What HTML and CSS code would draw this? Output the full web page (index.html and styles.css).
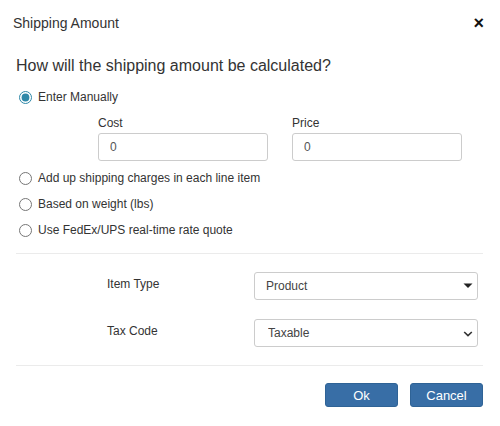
FILE: index.html
```html
<!DOCTYPE html>
<html>
<head>
<meta charset="utf-8">
<link rel="stylesheet" href="styles.css">
</head>
<body>
<div class="dialog">
  <div class="header">
    <span class="title">Shipping Amount</span>
    <span class="close">×</span>
  </div>
  <div class="question">How will the shipping amount be calculated?</div>
  <div class="options">
    <label class="radio-row"><input type="radio" name="calc" checked><span>Enter Manually</span></label>
    <div class="manual-fields">
      <div class="field">
        <div class="field-label">Cost</div>
        <input class="text-input" type="text" value="0">
      </div>
      <div class="field">
        <div class="field-label">Price</div>
        <input class="text-input" type="text" value="0">
      </div>
    </div>
    <div class="radio-list">
      <label class="radio-row"><input type="radio" name="calc"><span>Add up shipping charges in each line item</span></label>
      <label class="radio-row"><input type="radio" name="calc"><span>Based on weight (lbs)</span></label>
      <label class="radio-row"><input type="radio" name="calc"><span>Use FedEx/UPS real-time rate quote</span></label>
    </div>
  </div>
  <hr class="divider">
  <div class="settings">
    <div class="setting-label">Item Type</div>
    <div class="select-wrap">
      <select class="select"><option>Product</option></select>
      <svg class="select-icon" width="10" height="6" viewBox="0 0 10 6"><path d="M0.5 0.5 H9.5 L5 5 Z" fill="#222"/></svg>
    </div>
    <div class="setting-label">Tax Code</div>
    <div class="select-wrap">
      <select class="select select-pad"><option>Taxable</option></select>
      <svg class="select-icon chevron" width="10" height="6" viewBox="0 0 10 6"><path d="M1.2 1 L5 4.6 L8.8 1" fill="none" stroke="#333" stroke-width="1.6"/></svg>
    </div>
  </div>
  <hr class="divider">
  <div class="footer">
    <button class="btn">Ok</button>
    <button class="btn">Cancel</button>
  </div>
</div>
</body>
</html>
```

FILE: styles.css
```css
* { box-sizing: border-box; }
body {
  margin: 0;
  background: #fff;
  font-family: "Liberation Sans", Arial, sans-serif;
  color: #333;
}
.dialog {
  width: 500px;
  height: 426px;
  background: #fff;
}
.header {
  display: flex;
  justify-content: space-between;
  align-items: center;
  padding: 13px 16px 0 13px;
  height: 33px;
}
.title {
  font-size: 14px;
  line-height: 20px;
  color: #333;
}
.close {
  font-size: 18px;
  font-weight: bold;
  line-height: 20px;
  color: #111;
}
.question {
  margin-top: 23px;
  padding-left: 16px;
  font-size: 16px;
  line-height: 20px;
  color: #333;
}
.options {
  margin-top: 12px;
  padding-left: 19px;
}
.radio-row {
  display: flex;
  align-items: center;
  gap: 6px;
  height: 18px;
  font-size: 12px;
  color: #333;
}
.radio-row input {
  margin: 0;
  width: 13px;
  height: 13px;
  accent-color: #2f88a8;
}
.manual-fields {
  display: grid;
  grid-template-columns: 170px 170px;
  column-gap: 24px;
  margin-top: 9px;
  padding-left: 79px;
}
.field-label {
  font-size: 12px;
  line-height: 16px;
  margin-bottom: 2px;
  color: #333;
}
.text-input {
  width: 170px;
  height: 28px;
  border: 1px solid #ccc;
  border-radius: 3px;
  padding: 0 11px;
  font-family: inherit;
  font-size: 12px;
  color: #555;
}
.radio-list {
  display: flex;
  flex-direction: column;
  gap: 8px;
  margin-top: 8px;
}
.divider {
  border: 0;
  border-top: 1px solid #ebebeb;
  margin: 14px 17px 0 16px;
}
.settings {
  display: grid;
  grid-template-columns: 147px 224px;
  row-gap: 19px;
  align-items: center;
  padding-left: 107px;
  margin-top: 18px;
  margin-bottom: 18px;
}
.setting-label {
  font-size: 12px;
  color: #333;
  margin-top: -4px;
}
.select-wrap {
  position: relative;
  height: 28px;
}
.select {
  appearance: none;
  -webkit-appearance: none;
  width: 224px;
  height: 28px;
  border: 1px solid #ccc;
  border-radius: 3px;
  background: #fff;
  padding: 0 11px;
  font-family: inherit;
  font-size: 12px;
  color: #444;
}
.select-pad { padding-left: 13px; }
.select-icon {
  position: absolute;
  right: 5px;
  top: 11px;
}
.chevron { top: 12px; }
.divider + .footer { margin-top: 17px; }
.settings + .divider { margin-top: 0; }
.footer {
  display: flex;
  justify-content: flex-end;
  gap: 12px;
  padding-right: 17px;
}
.btn {
  width: 73px;
  height: 24px;
  border: 1px solid #2f6396;
  border-radius: 3px;
  background: #386ea6;
  color: #fff;
  font-family: inherit;
  font-size: 13px;
  padding: 0;
}
```
